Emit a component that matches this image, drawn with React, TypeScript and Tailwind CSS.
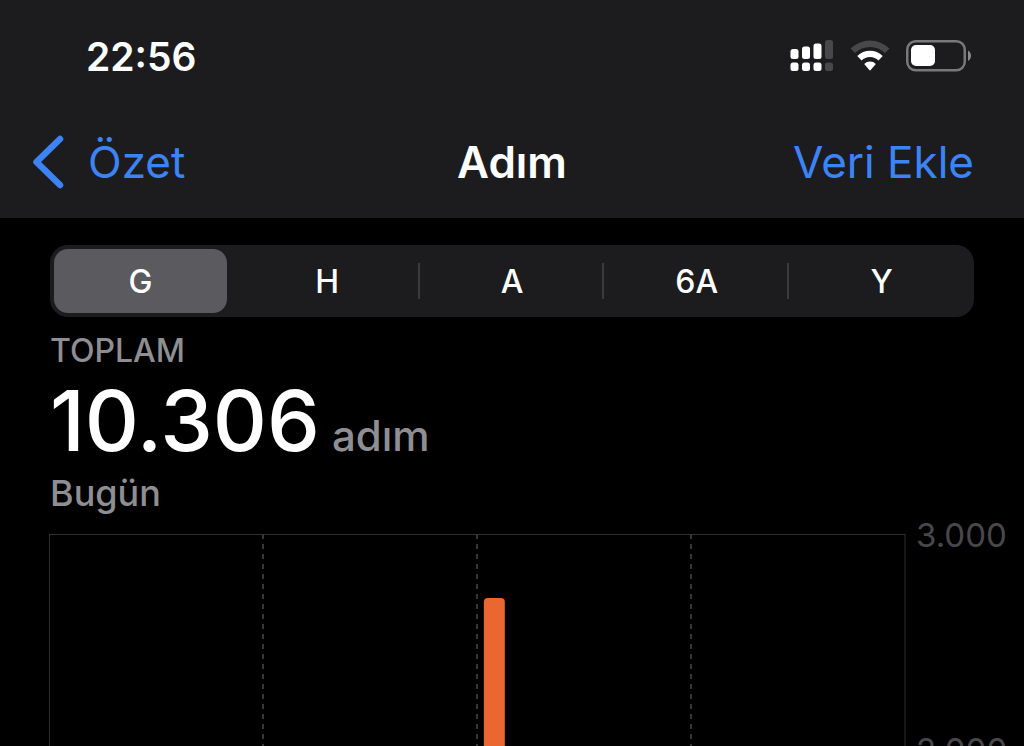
const ranges = ["G", "H", "A", "6A", "Y"];
const gridLines = ["25%", "50%", "75%"];
const bars = [{ hour: 12, steps: 2702 }];
const CHART_HEIGHT = 645;
const MAX_STEPS = 3000;

function SignalIcon() {
  return (
    <svg width="44" height="32" viewBox="0 0 44 32" aria-hidden="true">
      <g fill="#fff">
        <rect x="0.5" y="9" width="8" height="10" rx="2.5" />
        <rect x="12" y="6.5" width="8" height="12.5" rx="2.5" />
        <rect x="23.5" y="3.5" width="8" height="15.5" rx="2.5" />
        <rect x="0.5" y="22.5" width="8" height="8.5" rx="2.5" />
        <rect x="12" y="22.5" width="8" height="8.5" rx="2.5" />
        <rect x="23.5" y="22.5" width="8" height="8.5" rx="2.5" />
      </g>
      <g fill="#48484a">
        <rect x="35" y="0" width="8" height="19" rx="2.5" />
        <rect x="35" y="22.5" width="8" height="8.5" rx="2.5" />
      </g>
    </svg>
  );
}

function WifiIcon() {
  return (
    <svg width="40" height="32" viewBox="0 0 40 32" aria-hidden="true">
      <path d="M0.5 8.5A28 28 0 0 1 39.5 8.5L35 13A21.5 21.5 0 0 0 5 13Z" fill="#48484a" />
      <path d="M7.3 16A18 18 0 0 1 32.7 16L28.5 20.5A12 12 0 0 0 11.5 20.5Z" fill="#fff" />
      <path d="M14.2 24A8 8 0 0 1 25.8 24L20.7 30Q20 30.8 19.3 30Z" fill="#fff" />
    </svg>
  );
}

function BatteryIcon() {
  return (
    <svg width="66" height="32" viewBox="0 0 66 32" aria-hidden="true">
      <rect x="1.25" y="1.25" width="57.5" height="29" rx="8.5" fill="none" stroke="#79797b" strokeWidth="2.5" />
      <rect x="5" y="5" width="24" height="21" rx="5" fill="#fff" />
      <path d="M62 10.5C66 12.5 66 19 62 21Z" fill="#8a8a8c" />
    </svg>
  );
}

function StepChart() {
  return (
    <div className="flex min-h-0 flex-1 items-start overflow-hidden pl-[49px]">
      <svg
        className="mt-[19px] h-[645px] min-w-0 flex-1 shrink-0 overflow-visible"
        role="img"
        aria-label="Adım"
      >
        <path d="M0.5 645V0.5" stroke="#303032" />
        <line x1="0" x2="100%" y1="0.5" y2="0.5" stroke="#303032" />
        <line x1="0" x2="100%" y1="215.5" y2="215.5" stroke="#303032" />
        <line x1="100%" x2="100%" y1="0" y2="645" stroke="#303032" />
        {gridLines.map((x) => (
          <line key={x} x1={x} x2={x} y1="0" y2="645" stroke="#363638" strokeWidth="2" strokeDasharray="5 5" />
        ))}
        {bars.map(({ hour, steps }) => {
          const height = (steps / MAX_STEPS) * CHART_HEIGHT;
          return (
            <rect
              key={hour}
              x={`${(hour / 24) * 100 + 0.8}%`}
              y={CHART_HEIGHT - height}
              width="2.45%"
              height={height}
              rx="4"
              fill="#eb6731"
            />
          );
        })}
      </svg>
      <div className="flex w-[119px] shrink-0 flex-col pt-1 pl-[11px] text-[33px] leading-8 text-[#48484a]">
        <span className="h-[215px]">3.000</span>
        <span className="h-[215px]">2.000</span>
      </div>
    </div>
  );
}

export default function App() {
  return (
    <div className="flex h-screen flex-col overflow-hidden bg-black font-['Inter','Liberation_Sans',sans-serif] text-white">
      <header className="bg-[#1c1c1e] pb-0.5">
        <div className="flex h-[108px] items-center justify-between pt-1 pr-[52px] pl-[86px]">
          <time className="pt-0.5 text-[39px] leading-10 font-semibold">22:56</time>
          <div className="flex items-center gap-4">
            <SignalIcon />
            <WifiIcon />
            <BatteryIcon />
          </div>
        </div>
        <nav className="grid h-[108px] grid-cols-[1fr_auto_1fr] items-center px-8 text-[44px] leading-[56px]">
          <a href="#ozet" className="flex items-center gap-6 text-[#3c84f6]">
            <svg width="32" height="54" viewBox="0 0 32 54" fill="none" stroke="currentColor" strokeWidth="6.5" strokeLinecap="round" strokeLinejoin="round" aria-hidden="true">
              <path d="M28 4L4.5 27L28 50" />
            </svg>
            Özet
          </a>
          <h1 className="font-semibold">Adım</h1>
          <button type="button" className="mr-[18px] justify-self-end text-[#3c84f6]">Veri Ekle</button>
        </nav>
      </header>

      <main className="flex min-h-0 flex-1 flex-col pt-[27px]">
        <div role="group" aria-label="Aralık" className="mx-[50px] grid h-[72px] shrink-0 grid-cols-5 rounded-[18px] bg-[#1c1c1f]">
          {ranges.map((range, i) => (
            <button
              key={range}
              type="button"
              aria-pressed={i === 0}
              className="flex items-center text-[32px] leading-10 font-medium"
            >
              <span
                className={
                  i === 0
                    ? "mr-2 ml-1 flex h-16 flex-1 items-center justify-center rounded-[14px] bg-[#5b5a5f] pt-0.5"
                    : "flex-1 pt-0.5"
                }
              >
                {range}
              </span>
              {i > 0 && i < ranges.length - 1 && <span className="-ml-0.5 h-9 w-0.5 bg-[#3a3a3d]" />}
            </button>
          ))}
        </div>

        <section className="px-[50px] pt-3.5 text-[#8e8e93]">
          <h2 className="text-[32px] leading-10 font-medium">TOPLAM</h2>
          <p className="flex items-baseline gap-3 text-[42px] leading-[56px] font-medium">
            <strong className="text-[84px] leading-[100px] font-medium text-white">10.306</strong>
            adım
          </p>
          <p className="text-[36px] leading-[44px] font-medium">Bugün</p>
        </section>
        <StepChart />
      </main>
    </div>
  );
}
